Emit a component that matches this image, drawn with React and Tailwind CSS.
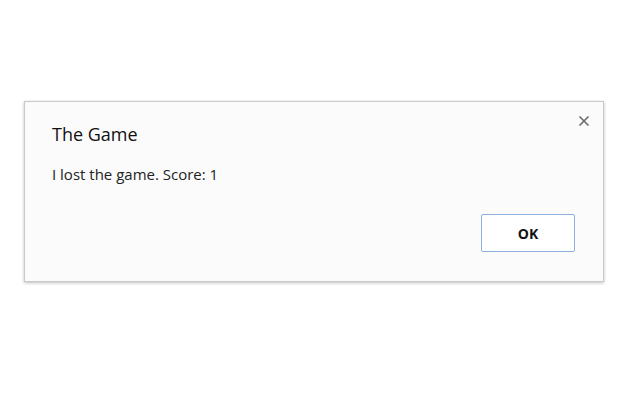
import React from "react";

export default function App() {
  return (
    <div className="w-[640px] h-[400px] bg-white pt-[101px] pl-[24px]" style={{ fontFamily: '"Open Sans", "Noto Sans", sans-serif' }}>
      <div className="relative w-[580px] h-[181px] bg-[#fbfbfc] border border-[#c9c9c9] shadow-[0_1px_3px_rgba(0,0,0,0.25)] flex flex-col pl-[27px] pr-[28px]">
        <button className="absolute right-[12px] top-[12px] w-[14px] h-[14px] flex items-center justify-center text-[#666]">
          <svg width="12" height="12" viewBox="0 0 12 12">
            <path d="M1.5 1.5 L10.5 10.5 M10.5 1.5 L1.5 10.5" stroke="#6a6a6a" strokeWidth="1.6" />
          </svg>
        </button>
        <div className="mt-[20px] text-[18px] leading-[24px] text-[#111]">The Game</div>
        <div className="mt-[18px] text-[15px] leading-[20px] text-[#222]">I lost the game. Score: 1</div>
        <div className="flex justify-end mt-[30px]">
          <button className="w-[94px] h-[38px] rounded-[2px] border border-[#8fb1e0] bg-white text-[14px] font-bold text-[#111]">OK</button>
        </div>
      </div>
    </div>
  );
}
